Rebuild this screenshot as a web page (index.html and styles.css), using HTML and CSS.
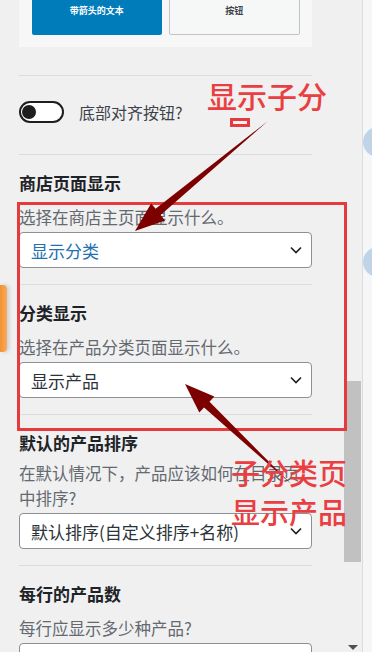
FILE: index.html
```html
<!DOCTYPE html>
<html lang="zh-CN">
<head>
    <meta charset="UTF-8">
    <meta name="viewport" content="width=device-width, initial-scale=1.0">
    <title>商店设置</title>
    <link rel="stylesheet" href="styles.css">
</head>
<body>
    <div class="screen">
        <div class="panel">
            <div class="content">
                <div class="preview">
                    <button class="btn primary">带箭头的文本</button>
                    <button class="btn secondary">按钮</button>
                </div>

                <div class="toggleRow">
                    <span class="toggle"><span class="knob"></span></span>
                    <span class="toggleLabel">底部对齐按钮?</span>
                </div>

                <div class="field">
                    <h3>商店页面显示</h3>
                    <p>选择在商店主页面显示什么。</p>
                    <div class="select active">
                        <span>显示分类</span>
                        <svg class="chevron" width="12" height="8" viewBox="0 0 12 8"><path d="M1 1.5 6 6.5 11 1.5"/></svg>
                    </div>
                </div>

                <div class="field">
                    <h3>分类显示</h3>
                    <p>选择在产品分类页面显示什么。</p>
                    <div class="select">
                        <span>显示产品</span>
                        <svg class="chevron" width="12" height="8" viewBox="0 0 12 8"><path d="M1 1.5 6 6.5 11 1.5"/></svg>
                    </div>
                </div>

                <div class="field">
                    <h3>默认的产品排序</h3>
                    <p class="long">在默认情况下，产品应该如何在目录页中排序?</p>
                    <div class="select">
                        <span>默认排序(自定义排序+名称)</span>
                        <svg class="chevron" width="12" height="8" viewBox="0 0 12 8"><path d="M1 1.5 6 6.5 11 1.5"/></svg>
                    </div>
                </div>

                <div class="field">
                    <h3>每行的产品数</h3>
                    <p>每行应显示多少种产品?</p>
                    <div class="select"></div>
                </div>
            </div>

            <div class="scrollbar">
                <div class="thumb"></div>
                <span class="scrollDown"></span>
            </div>
        </div>

        <div class="side">
            <span class="blob first"></span>
            <span class="blob"></span>
        </div>
    </div>

    <!-- orange tab peeking in from the left -->
    <div class="tab"></div>

    <!-- red annotations drawn over the screenshot -->
    <svg class="marks" width="372" height="652" viewBox="0 0 372 652">
        <rect x="18.5" y="203.5" width="327" height="226" fill="none" stroke="#e63b3e" stroke-width="3"/>
        <rect x="231.5" y="119.5" width="17" height="6" fill="none" stroke="#e63b3e" stroke-width="3"/>
        <polygon points="268,121 160.6,215 165.1,220.4 135,231 151.1,203.4 155.6,208.8" fill="#7d0000"/>
        <polygon points="291,484 209.5,401.7 214.3,396.6 185,384 199.3,412.6 204.1,407.5" fill="#7d0000"/>
    </svg>
    <div class="note noteTop">显示子分</div>
    <div class="note noteBottom">子分类页<br>显示产品</div>
</body>
</html>
```

FILE: styles.css
```css
body {
    margin: 0;
    width: 372px;
    height: 652px;
    overflow: hidden;
    position: relative;
    font-family: "Noto Sans CJK SC", "Noto Sans", sans-serif;
}

.screen {
    display: flex;
    height: 652px;
}

.panel {
    width: 362px;
    height: 652px;
    display: flex;
    background-color: #f0f0f0;
    border-right: 1px solid #dcdcde;
    overflow: hidden;
}

.content {
    width: 293px;
    padding-left: 19px;
}

.preview {
    margin-top: -14px;
    padding: 0 12px 12px 13px;
    display: flex;
    gap: 7px;
    background-color: #f7f7f7;
}

.btn {
    flex: 1;
    height: 49px;
    border-radius: 2px;
    font-family: inherit;
    font-size: 9px;
    font-weight: 700;
    display: flex;
    align-items: center;
    justify-content: center;
    padding: 0;
}

.primary {
    background-color: #007cba;
    color: white;
    border: none;
}

.secondary {
    background-color: #f6f7f7;
    color: #3c434a;
    border: 1px solid #c3c4c7;
    font-weight: 600;
}

.toggleRow {
    margin-top: 28px;
    border-top: 1px solid #dcdcde;
    padding: 25px 0 31px;
    display: flex;
    align-items: center;
    gap: 15px;
}

.toggle {
    width: 45px;
    height: 22px;
    box-sizing: border-box;
    border: 2px solid #1e1e1e;
    border-radius: 11px;
    background-color: white;
    display: flex;
    align-items: center;
    padding-left: 1px;
}

.knob {
    width: 14px;
    height: 14px;
    border-radius: 50%;
    background-color: #1e1e1e;
}

.toggleLabel {
    font-size: 16px;
    line-height: 22px;
    color: #3c434a;
}

.field {
    border-top: 1px solid #dcdcde;
    padding: 15px 0 16px;
}

.field h3 {
    margin: 0 0 9px;
    font-size: 17px;
    line-height: 26px;
    font-weight: 700;
    color: #1d2327;
}

.field p {
    margin: 0 0 2px;
    font-size: 16.5px;
    line-height: 25px;
    color: #646970;
}

.field p.long {
    margin-top: -4px;
}

.select {
    height: 36px;
    box-sizing: border-box;
    border: 1px solid #8c8f94;
    border-radius: 4px;
    background-color: white;
    display: flex;
    align-items: center;
    justify-content: space-between;
    padding: 0 9px 0 11px;
    font-size: 17px;
    color: #2c3338;
}

.select.active {
    color: #2271b1;
}

.chevron path {
    fill: none;
    stroke: #1e1e1e;
    stroke-width: 1.6;
}

.scrollbar {
    width: 17px;
    margin-left: auto;
    margin-right: 1px;
    display: flex;
    flex-direction: column;
    align-items: center;
}

.thumb {
    margin-top: 381px;
    width: 17px;
    height: 181px;
    background-color: #c1c1c1;
}

.scrollDown {
    margin-top: auto;
    margin-bottom: 2px;
    border-left: 5px solid transparent;
    border-right: 5px solid transparent;
    border-top: 5px solid #505050;
}

.side {
    flex: 1;
    background-color: #f4f6f8;
    overflow: hidden;
    display: flex;
    flex-direction: column;
}

.blob {
    width: 30px;
    height: 30px;
    flex-shrink: 0;
    border-radius: 50%;
    background-color: #c0d4e8;
    margin-top: 90px;
}

.blob.first {
    margin-top: 127px;
}

.tab {
    position: absolute;
    left: 0;
    top: 285px;
    width: 7px;
    height: 67px;
    background: linear-gradient(to right, #f39232, #f7aa5e);
    border-radius: 0 4px 4px 0;
    box-shadow: 2px 0 4px rgba(0, 0, 0, 0.15);
}

.marks {
    position: absolute;
    left: 0;
    top: 0;
}

.note {
    position: absolute;
    color: #ea3f42;
    font-weight: 500;
    white-space: nowrap;
}

.noteTop {
    left: 207px;
    top: 80px;
    font-size: 30px;
    line-height: 30px;
}

.noteBottom {
    left: 231px;
    top: 453px;
    font-size: 29px;
    line-height: 39px;
}
```
